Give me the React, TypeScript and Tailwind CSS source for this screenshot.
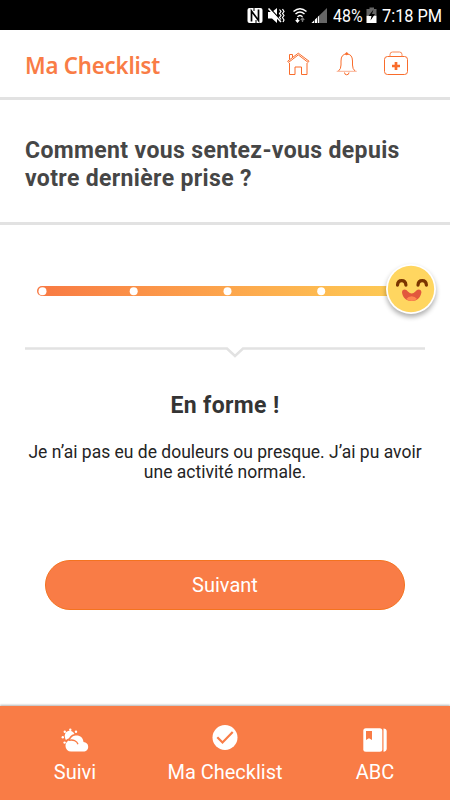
import type { ReactNode } from "react";

interface Tab {
  label: string;
  icon: ReactNode;
}

function StatusBar() {
  return (
    <div className="flex h-[30px] items-center bg-black pl-[247px] text-[19px] leading-[30px] whitespace-nowrap text-white">
      <svg width="86" height="30" viewBox="247 0 86 30" className="shrink-0">
        {/* NFC */}
        <path d="M249.500 8h11q2 0 2 2v11q0 2-2 2h-11q-2 0-2-2V10q0-2 2-2z" fill="#fff" />
        <path d="M251.500 21.500V11l7 9.500V9.500" fill="none" stroke="#000" strokeWidth="1.700" />
        <path d="M254 8v3M256 20v3" fill="none" stroke="#000" strokeWidth="1" />
        {/* Muted speaker */}
        <path d="M268 12h4l5-4v15l-5-4.500h-4z" fill="#fff" />
        <path d="M269.500 8l13 14" stroke="#000" strokeWidth="1.500" />
        <path d="M268.500 8.500l12.500 13.500" stroke="#fff" strokeWidth="1.500" />
        <path d="M279.500 9.500l1.500 2-1.500 2 1.500 2-1.500 2 1.500 2M282.500 9l1.500 2.500-1.500 2 1.500 2-1.500 2 1.500 2.500-1 2" fill="none" stroke="#fff" strokeWidth="1.200" />
        {/* Wifi */}
        <path d="M293.500 11.500q6.500-5.500 13 0M295.500 14q4.500-4 9 0M297.500 16.700q2.500-2.500 5 0" fill="none" stroke="#fff" strokeWidth="1.500" />
        <path d="M297.500 18v4m-1.700-2l1.700 2 1.700-2" fill="none" stroke="#fff" strokeWidth="1.300" />
        <path d="M302.500 22v-4m-1.700 2l1.700-2 1.700 2" fill="none" stroke="#777" strokeWidth="1.300" />
        {/* Cell signal */}
        <path d="M311.500 23L327 8v15z" fill="#666" />
        <path d="M311.500 23l7.500-7.300V23z" fill="#fff" />
        <path d="M314.500 17v6M317.500 15v8" stroke="#000" strokeWidth=".7" />
      </svg>
      <span className="w-[33px] origin-left scale-x-[0.84] pt-[2px]">48%</span>
      <svg width="11" height="30" viewBox="366 0 11 30" className="shrink-0">
        <path d="M366.500 9h3V7.500h4.500V9h2.500v6h-10z" fill="#666" />
        <path d="M366.500 15.500h10V23h-10z" fill="#fff" />
        <path d="M373.500 9.500l-5 6.500h3l-1 4.500 4.500-6.500h-3z" fill="#000" />
      </svg>
      <span className="ml-[5px] w-[62px] origin-left scale-x-[0.86] pt-[2px]">7:18 PM</span>
    </div>
  );
}

function HomeIcon() {
  return (
    <svg width="24" height="26" viewBox="286 52 24 26" fill="none" stroke="#f96c2b" strokeWidth="1">
      <path d="M287.700 62.200l10.600-8 10.700 8-.9 1.200-9.800-7.500-9.800 7.500zM289.500 60.500v-5h3v2.800M289.500 64v11.500h5.500V68h6.500v7.500h5.500V64" />
    </svg>
  );
}

function BellIcon() {
  return (
    <svg width="22" height="26" viewBox="336 52 22 26" fill="none" stroke="#f96c2b" strokeWidth="1">
      <path d="M338.500 72q2.500-2 2.500-6v-4q0-7 5.700-7t5.800 7v4q0 4 2.500 6" />
      <path d="M336.700 72.300h20" stroke="#fab092" />
      <path d="M344.500 73.500q0 2.300 2.200 2.300t2.300-2.300" />
      <circle cx="346.700" cy="54.700" r="1" fill="#f96c2b" />
    </svg>
  );
}

function FirstAidIcon() {
  return (
    <svg width="26" height="26" viewBox="383 52 26 26" fill="none" stroke="#f96c2b" strokeWidth="1">
      <rect x="384.500" y="57.500" width="23" height="18" rx="3" />
      <path d="M390 57.500v-2q0-2.500 2.500-2.500h7q2.500 0 2.500 2.500v2" stroke="#f98a58" />
      <path d="M396 63v8M392 67h8" strokeWidth="2.700" />
    </svg>
  );
}

function HappyFace() {
  return (
    <svg width="50" height="50" viewBox="386 263 50 50">
      <circle cx="411" cy="288" r="23.200" fill="#ffd660" />
      <path d="M397.500 284.200q.3-4.500 4.200-4.500t4.200 4.500M418 284.200q.3-4.500 4.200-4.500t4.200 4.500" fill="none" stroke="#7b3500" strokeWidth="3.200" strokeLinecap="round" />
      <path d="M402 291.500q0-3 2.700-3 1.800 0 3.200 2 3.800 3.800 7.500 0 1.600-2 3.200-2 2.800 0 2.800 3c-.8 5-4.500 8.500-9.700 8.500s-9.100-3.500-9.700-8.500z" fill="#e2583d" />
      <path d="M406.300 298q2-2.800 5.400-2.800t5.300 2.800q-2.300 2-5.300 2t-5.400-2z" fill="#ff8850" />
    </svg>
  );
}

function MoodSlider() {
  return (
    <div className="relative mt-[61px] ml-[37px] h-[10px] w-[375px] rounded-full bg-gradient-to-r from-[#f87943] to-[#fdce55]">
      <svg width="375" height="10" viewBox="0 0 375 10" className="block">
        <circle cx="5.500" cy="5.300" r="4" fill="#fff" />
        <circle cx="96.700" cy="5.300" r="4" fill="#fff" />
        <circle cx="190.500" cy="5.300" r="4" fill="#fff" />
        <circle cx="284.200" cy="5.300" r="4" fill="#fff" />
      </svg>
      <div className="absolute -top-[22px] left-[349px] size-[50px] rounded-full bg-white shadow-[0_3px_5px_rgba(0,0,0,0.32)]">
        <HappyFace />
      </div>
    </div>
  );
}

const tabs: Tab[] = [
  {
    label: "Suivi",
    icon: (
      <svg width="30" height="28" viewBox="60 724 30 28" className="block">
        <path d="M65 737.500a5 5 0 0 1 9.500-3.500q-4 .8-5.500 4.300-1.800.5-3 1.700-.8-1-1-2.500z" fill="#fff" />
        <g fill="#fff">
          <circle cx="70.300" cy="729.700" r="1.200" />
          <circle cx="64.800" cy="731.700" r="1.200" />
          <circle cx="76" cy="731.700" r="1.200" />
          <circle cx="62.800" cy="737.200" r="1.200" />
          <circle cx="64.600" cy="742.600" r="1.200" />
        </g>
        <path d="M71 751.500a5.500 5.500 0 0 1-5.500-5.500c0-3.500 2.300-5.300 4.500-5.700 1-3.500 3.800-4.800 6.500-4.800 4 0 6.800 2.700 7 6.500 2.800.3 4.700 2 4.700 4.700s-2 4.800-4.700 4.800z" fill="#fff" />
        <path d="M69 740.300c4-1 8 .5 9 4" fill="none" stroke="#f97c46" strokeWidth="1.300" />
      </svg>
    ),
  },
  {
    label: "Ma Checklist",
    icon: (
      <svg width="30" height="28" viewBox="210 724 30 28" className="block">
        <circle cx="225" cy="737.500" r="12.500" fill="#fff" />
        <path d="M217.300 737.300l5.200 5.200 10.200-10.500" fill="none" stroke="#f97c46" strokeWidth="2.200" />
      </svg>
    ),
  },
  {
    label: "ABC",
    icon: (
      <svg width="30" height="28" viewBox="360 724 30 28" className="block">
        <rect x="363.300" y="728.300" width="19" height="23.400" rx="2.500" fill="#fff" />
        <path d="M383.500 728.500q3.200 0 3.200 3v17q0 3-3.200 3.200z" fill="#fff" />
        <path d="M366 731h6v9l-3-1.700-3 1.700z" fill="#f97c46" />
      </svg>
    ),
  },
];

export default function App() {
  return (
    <div className="flex h-[800px] w-[450px] flex-col overflow-hidden bg-white font-[Roboto,sans-serif]">
      <StatusBar />

      {/* Header */}
      <header className="flex h-[70px] shrink-0 items-center border-b-3 border-[#e2e2e2] pl-[25px]">
        <h1 className="w-[261px] origin-left scale-x-[0.925] pt-[2px] font-['Noto_Sans',sans-serif] text-[24px] font-semibold tracking-[-0.2px] text-[#f97c46]">
          Ma Checklist
        </h1>
        <div className="flex">
          <HomeIcon />
          <span className="w-[26px]" />
          <BellIcon />
          <span className="w-[25px]" />
          <FirstAidIcon />
        </div>
      </header>

      {/* Question */}
      <section className="h-[125px] shrink-0 border-b-3 border-[#e2e2e2] pt-[37px] pl-[25px]">
        <h2 className="text-[23px] leading-[28px] font-bold tracking-[0.36px] text-[#464646]">
          Comment vous sentez-vous depuis
          <br />
          votre dernière prise ?
        </h2>
      </section>

      <main className="flex grow flex-col">
        <MoodSlider />

        <svg width="400" height="14" viewBox="25 346 400 14" className="mt-[50px] ml-[25px] shrink-0">
          <path d="M25 348.500h202l8 7.500 8-7.500h182" fill="none" stroke="#e2e2e2" strokeWidth="2.500" />
        </svg>

        <div className="pt-[31px] text-center text-[#343434]">
          <h3 className="text-[23px] leading-[30px] font-bold tracking-[0.36px]">En forme !</h3>
          <p className="mt-[21px] text-[17.5px] leading-[20px] whitespace-nowrap text-[#242424]">
            Je n’ai pas eu de douleurs ou presque. J’ai pu avoir
            <br />
            une activité normale.
          </p>
        </div>

        <button className="mx-[45px] mt-[78px] h-[50px] rounded-full border border-[#f4731f] bg-[#f97c46] pb-px text-[20px] text-white">
          Suivant
        </button>
      </main>

      {/* Bottom navigation */}
      <nav className="grid h-[94px] shrink-0 grid-cols-3 bg-[#f97c46] text-white shadow-[0_-1px_2px_rgba(0,0,0,0.3)]">
        {tabs.map((tab) => (
          <div key={tab.label} className="flex flex-col items-center pt-[18px]">
            {tab.icon}
            <span className="mt-[6px] text-[20px] leading-[28px]">{tab.label}</span>
          </div>
        ))}
      </nav>
    </div>
  );
}
